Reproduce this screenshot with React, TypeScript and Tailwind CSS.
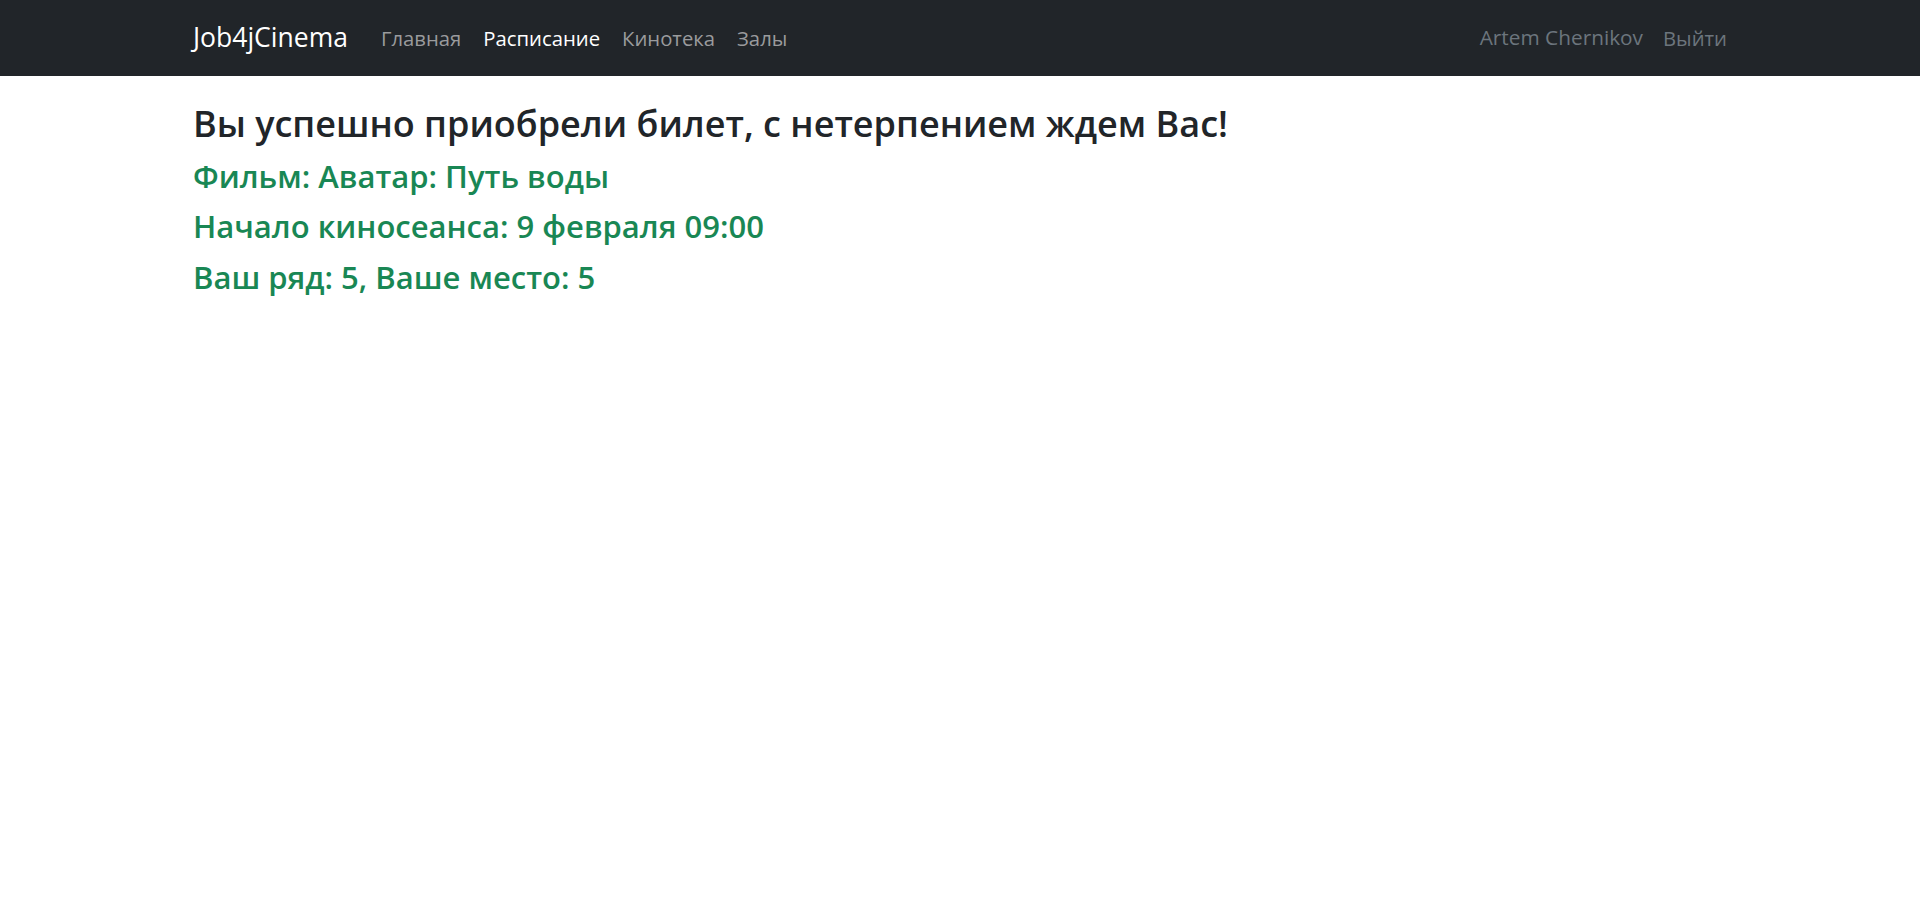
import React from 'react';

const NAV_LINKS = [
  { label: 'Главная', active: false },
  { label: 'Расписание', active: true },
  { label: 'Кинотека', active: false },
  { label: 'Залы', active: false },
];

const TICKET_LINES = [
  'Фильм: Аватар: Путь воды',
  'Начало киносеанса: 9 февраля 09:00',
  'Ваш ряд: 5, Ваше место: 5',
];

export default function App() {
  return (
    <div className="min-h-screen bg-white" style={{ fontFamily: '"Open Sans", "Noto Sans", sans-serif' }}>
      <nav className="bg-[#212529] h-[76px] flex items-center">
        <div className="w-full px-[193px] flex items-center justify-between">
          <div className="flex items-center">
            <a className="text-white text-[26.5px] mr-[33px]">Job4jCinema</a>
            <div className="flex items-center gap-[22px]">
              {NAV_LINKS.map((link) => (
                <a
                  key={link.label}
                  className={`text-[20.3px] ${link.active ? 'text-white' : 'text-[#9a9b9d]'}`}
                >
                  {link.label}
                </a>
              ))}
            </div>
          </div>
          <div className="flex items-center gap-[20px]">
            <a className="text-[20.8px] text-[#6c757d]">Artem Chernikov</a>
            <a className="text-[20.3px] text-[#6c757d]">Выйти</a>
          </div>
        </div>
      </nav>

      <div className="px-[193px] pt-[26px]">
        <h2 className="text-[36px] font-semibold text-[#212529] leading-[1.2] mb-[13px]">
          Вы успешно приобрели билет, с нетерпением ждем Вас!
        </h2>
        {TICKET_LINES.map((line) => (
          <h4 key={line} className="text-[31px] font-semibold text-[#198754] leading-[1.2] mb-[13px]">
            {line}
          </h4>
        ))}
      </div>
    </div>
  );
}
